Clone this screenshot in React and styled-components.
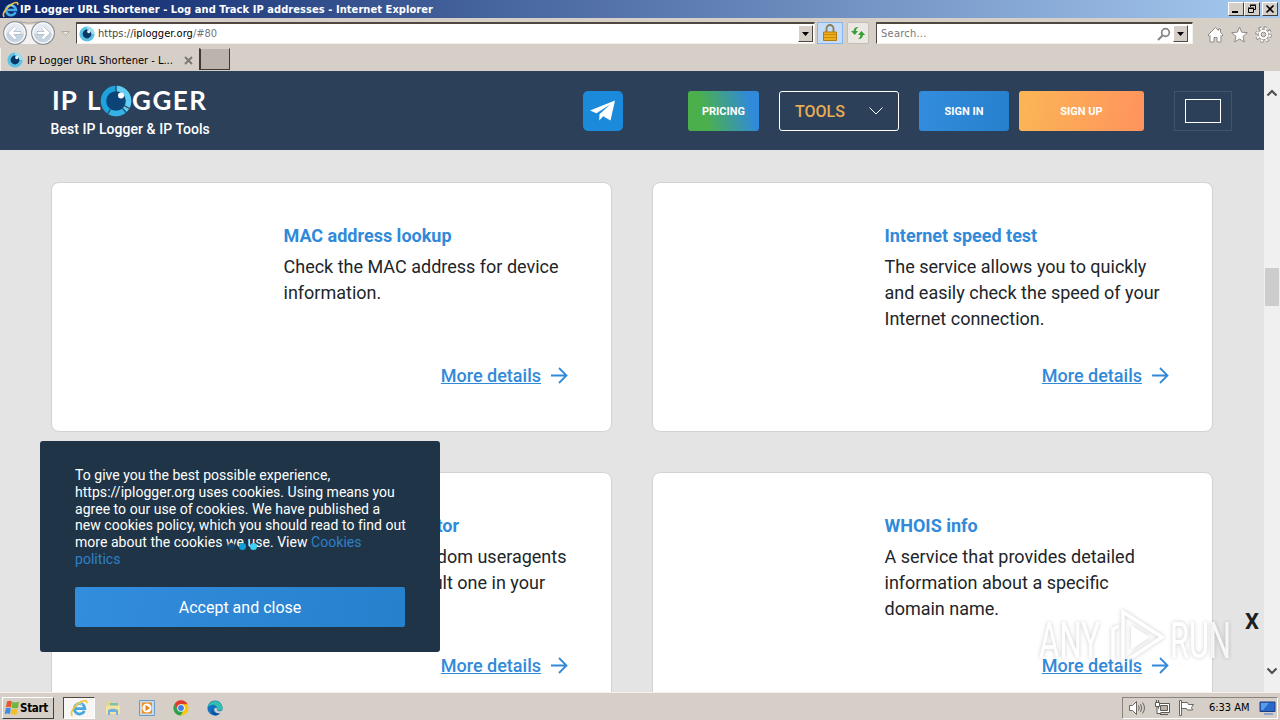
import styled, { createGlobalStyle } from 'styled-components';

const GlobalStyle = createGlobalStyle`
  * {
    box-sizing: border-box;
  }
  body {
    margin: 0;
    overflow: hidden;
    font-family: Roboto, sans-serif;
  }
`;

// Whole desktop
const Desktop = styled.div`
  position: relative;
  display: flex;
  flex-direction: column;
  width: 1280px;
  height: 720px;
  overflow: hidden;
  background: #d6cfc7;
`;

// System font used by the window chrome
const UiText = styled.span`
  font-family: 'DejaVu Sans Condensed', 'DejaVu Sans', sans-serif;
  font-stretch: condensed;
  font-size: ${(props) => props.$size || 11}px;
  font-weight: ${(props) => (props.$bold ? 700 : 400)};
  letter-spacing: ${(props) => props.$spacing || 0}px;
  color: ${(props) => props.$color || '#000'};
  white-space: nowrap;
`;

// Title bar
const TitleBar = styled.div`
  display: flex;
  align-items: center;
  gap: 1px;
  flex: none;
  height: 18px;
  padding: 0 2px;
  background: linear-gradient(90deg, #0a246a, #a6caf0);
`;

const WindowButtons = styled.div`
  display: flex;
  margin-left: auto;
`;

const WindowButton = styled.div`
  display: flex;
  width: 16px;
  height: 14px;
  margin-left: ${(props) => props.$gap || 0}px;
  background: #d6cfc7;
  border: 1px solid;
  border-color: #fff #404040 #404040 #fff;
`;

// Address bar row
const Toolbar = styled.div`
  display: flex;
  align-items: center;
  flex: none;
  height: 30px;
  padding: 0 8px 0 3px;
`;

const Field = styled.div`
  display: flex;
  align-items: center;
  gap: ${(props) => props.$inner || 3}px;
  width: ${(props) => props.$width}px;
  height: 22px;
  margin-left: ${(props) => props.$gap}px;
  padding: 0 1px 0 ${(props) => props.$left || 2}px;
  background: #fff;
  border: 1px solid #f4f1ec;
  border-top: 2px solid #504840;
  border-left: 1px solid #504840;
`;

const DropButton = styled.div`
  display: flex;
  align-items: center;
  justify-content: center;
  width: 15px;
  height: 17px;
  margin-right: ${(props) => props.$right || 0}px;
  background: #d6cfc7;
  border: 1px solid;
  border-color: #fff #504840 #504840 #fff;
`;

const Spacer = styled.div`
  flex: 1;
`;

const ToolButton = styled.div`
  display: flex;
  align-items: center;
  justify-content: center;
  width: ${(props) => props.$width}px;
  height: 22px;
  margin-left: ${(props) => props.$gap}px;
  background: ${(props) => (props.$active ? '#c4dcf8' : '#ebe8e3')};
  border: 1px solid ${(props) => (props.$active ? '#86b4ee' : '#c4beb6')};
  border-radius: ${(props) => (props.$active ? 0 : 2)}px;
`;

const ToolIcons = styled.div`
  display: flex;
  align-items: center;
  gap: 7px;
  margin-left: auto;
  padding-top: 3px;
`;

// Tabs row
const TabRow = styled.div`
  display: flex;
  flex: none;
  height: 23px;
`;

const Tab = styled.div`
  display: flex;
  align-items: center;
  width: 199px;
  padding: 1px 6px 0 6px;
  gap: 4px;
  border-left: 1px solid #f4f1ec;
`;

const NewTab = styled.div`
  width: 31px;
  height: 22px;
  background: #bcb4ac;
  border: 1px solid #403830;
  border-width: 1px 1px 1px 2px;
  border-top-color: #d6cfc7;
`;

// Page and its scrollbar
const Browser = styled.div`
  display: flex;
  flex: none;
  height: 621px;
`;

const Page = styled.div`
  width: 1264px;
  height: 621px;
  overflow: hidden;
  background: #e4e4e4;
`;

const ScrollBar = styled.div`
  display: flex;
  flex-direction: column;
  align-items: center;
  justify-content: space-between;
  width: 16px;
  padding: 18px 0 17px;
  background: #f0f0f0;
`;

const ScrollThumb = styled.div`
  width: 14px;
  height: 38px;
  margin: 171px 0 auto;
  background: #cdcdcd;
`;

// Site header
const Header = styled.header`
  display: flex;
  align-items: flex-start;
  height: 79px;
  padding: 20px 32px 0 51px;
  background: #2c4059;
`;

const Brand = styled.div`
  width: 532px;
  margin-top: -6px;
`;

const Wordmark = styled.div`
  display: flex;
  align-items: center;
  height: 31px;
  padding-left: 1px;
`;

const WordmarkText = styled.span`
  width: ${(props) => props.$width}px;
  font-family: Lato, sans-serif;
  font-size: 26px;
  font-weight: 700;
  line-height: 31px;
  letter-spacing: ${(props) => props.$spacing || 0}px;
  color: #fff;
  white-space: nowrap;
`;

const Tagline = styled.div`
  margin: 5px 0 0 -0.5px;
  font-size: 14px;
  font-weight: 500;
  line-height: 17px;
  letter-spacing: 0.05px;
  color: #fff;
`;

const Telegram = styled.div`
  display: flex;
  align-items: center;
  justify-content: center;
  width: 40px;
  height: 40px;
  margin-right: 65px;
  background: #1c8adb;
  border-radius: 5px;
`;

const HeaderButton = styled.div`
  display: flex;
  align-items: center;
  justify-content: center;
  width: ${(props) => props.$width}px;
  height: 40px;
  margin-right: ${(props) => props.$gap}px;
  background: ${(props) => props.$fill};
  border-radius: 3px;
  font-size: 11px;
  font-weight: 700;
  color: #fff;
`;

const ToolsSelect = styled.div`
  display: flex;
  align-items: center;
  justify-content: space-between;
  width: 120px;
  height: 40px;
  margin-right: 20px;
  padding: 0 15px 0 15px;
  border: 1px solid #fff;
  border-radius: 3px;
  font-size: 16px;
  font-weight: 500;
  color: #e8ac55;
`;

const Language = styled.div`
  display: flex;
  align-items: center;
  justify-content: center;
  width: 58px;
  height: 40px;
  border: 1px solid #40546d;
`;

const Flag = styled.div`
  width: 36px;
  height: 24px;
  border: 1px solid #fff;
`;

// Service cards
const CardGrid = styled.main`
  display: grid;
  grid-template-columns: 561px 561px;
  grid-auto-rows: 250px;
  gap: 40px;
  padding: 32px 51px 0;
`;

const Card = styled.article`
  display: flex;
  flex-direction: column;
  padding: 40px 43px 42px 231.5px;
  background: #fff;
  border: 1px solid #d2d2d2;
  border-radius: 8px;
`;

const CardTitle = styled.h3`
  margin: 0 0 5px;
  font-size: 18px;
  font-weight: 700;
  line-height: 26px;
  color: #318ad9;
`;

const CardText = styled.p`
  margin: 0;
  font-size: 18px;
  line-height: 26px;
  color: #212529;
  white-space: pre;
`;

const MoreLink = styled.a`
  display: flex;
  align-items: center;
  justify-content: flex-end;
  gap: 9px;
  margin-top: auto;
  font-size: 18px;
  font-weight: 500;
  line-height: 26px;
  color: #318ad9;

  span {
    text-decoration: underline;
  }
`;

// Cookie notice lies over the cards
const CookieNotice = styled.aside`
  position: absolute;
  left: 40px;
  top: 441px;
  width: 400px;
  height: 211px;
  padding: 26px 35px 0;
  background: #1f3547;
  border-radius: 3px;
  font-size: 14px;
  line-height: 16.8px;
  color: #fff;
`;

const CookieText = styled.p`
  height: 101px;
  margin: 0 0 19px;
  letter-spacing: 0.035px;
  white-space: pre;
`;

const CookieLink = styled.a`
  color: #2f80c8;
`;

const AcceptButton = styled.div`
  height: 40px;
  padding-top: 1px;
  background: linear-gradient(100deg, #338ddd, #2780cc);
  border-radius: 2px;
  font-size: 16px;
  line-height: 40px;
  text-align: center;
`;

const Loader = styled.div`
  position: absolute;
  left: 228px;
  top: 543px;
  display: flex;
  gap: 4px;
`;

const Dot = styled.i`
  width: 7px;
  height: 7px;
  border-radius: 50%;
  background: ${(props) => props.$color};
`;

const CloseMark = styled.div`
  position: absolute;
  left: 1245px;
  top: 609px;
  font-size: 22px;
  font-weight: 700;
  line-height: 26px;
  color: #1d1f22;
`;

const Watermark = styled.svg`
  position: absolute;
  left: 1034px;
  top: 604px;
  overflow: visible;
  filter: drop-shadow(0 0 2px rgba(0, 0, 0, 0.28));
  opacity: 0.72;
`;

// Taskbar
const TaskBar = styled.footer`
  display: flex;
  align-items: center;
  flex: none;
  height: 28px;
  padding: 2px 2px 0;
  background: #d6cfc7;
  border-top: 1px solid #f4f1ec;
`;

const StartButton = styled.div`
  display: flex;
  align-items: center;
  width: 52px;
  height: 22px;
  padding-left: 1px;
  border: 1px solid;
  border-color: #fff #404040 #404040 #fff;
`;

const TaskItem = styled.div`
  display: flex;
  align-items: center;
  justify-content: center;
  width: ${(props) => (props.$active ? 32 : 34)}px;
  height: 22px;
  margin: 0 ${(props) => (props.$active ? '1px 0 9px' : 0)};
  background: ${(props) => (props.$active ? '#f8f6f4' : 'none')};
  border: ${(props) => (props.$active ? '1px solid' : '0')};
  border-color: #504840 #fff #fff #504840;
`;

const Tray = styled.div`
  display: flex;
  align-items: center;
  width: 156px;
  height: 22px;
  margin-left: auto;
  padding-left: 6px;
  border: 1px solid;
  border-color: #8c847c #fff #fff #8c847c;
`;

const TrayIcons = styled.div`
  display: flex;
  gap: 8px;
  width: 80px;
`;

const IeIcon = ({ size }) => (
  <svg width={size} height={size} viewBox="0 0 16 16" fill="none">
    <path d="M12.8 10.6A4.700 4.700 0 1 1 13.200 8.500H4.500" stroke="#45a9e6" strokeWidth="2.500" />
    <path d="M5.200 5.200A4 4 0 0 1 11 5.400" stroke="#a5e4fa" strokeWidth="1" />
    <path d="M2.200 14.800C-.5 13.400 3 7 8 3.600 12 .8 15.700.4 14.700 3.800" stroke="#f3c53c" strokeWidth="1.500" />
  </svg>
);

const Eye = () => (
  <svg width="16" height="16" viewBox="0 0 16 16">
    <circle cx="8" cy="8" r="7.600" fill="#5cc2e4" />
    <path d="M8 .4a7.600 7.600 0 0 1 7.600 7.600L8 8z" fill="#a0def0" />
    <circle cx="8" cy="8" r="4.400" fill="#0b3768" />
    <circle cx="9.800" cy="5.500" r="1.700" fill="#d8f2fa" />
  </svg>
);

const NavButtons = () => (
  <svg width="68" height="28" viewBox="0 0 68 28" fill="none">
    <path d="M12 3.500Q26 8 40 3.500V25H12Z" fill="#f4f2f0" />
    <path d="M16 2.800Q26 5.500 36 2.800" stroke="#aca6a0" />
    {[12, 40].map((x) => (
      <g key={x}>
        <circle cx={x} cy="14" r="11.300" fill="#e6ebf1" stroke="#8f9296" strokeWidth="1.300" />
        <path d={`M${x - 9} 14.500a9 9 0 0 0 18 0z`} fill="#c6d3e1" />
        <circle cx={x} cy="14" r="10" stroke="#f7f9fb" strokeWidth="1.200" />
      </g>
    ))}
    <path d="M12.500 8.500 7 14l5.500 5.500M7.500 14H18" stroke="#a3afbc" strokeWidth="3.800" />
    <path d="M12.500 8.500 7 14l5.500 5.500M7.500 14H17.600" stroke="#fff" strokeWidth="2.600" />
    <path d="M39.500 8.500 45 14l-5.500 5.500M44.500 14H34" stroke="#a3afbc" strokeWidth="3.800" />
    <path d="M39.500 8.500 45 14l-5.500 5.500M44.500 14H34.400" stroke="#fff" strokeWidth="2.600" />
    <path d="M58.500 12.500h8l-4 4z" fill="#e8e4df" stroke="#b4aca4" />
  </svg>
);

const Triangle = () => (
  <svg width="7" height="4" viewBox="0 0 7 4">
    <path d="M0 0h7L3.500 4z" fill="#000" />
  </svg>
);

const LogoEye = () => (
  <svg width="32" height="32" viewBox="0 0 32 32" fill="none">
    <circle cx="16" cy="16" r="12" stroke="#1fa3dc" strokeWidth="6.500" />
    <path d="M16.500 4A12 12 0 0 1 28 15" stroke="#62cdf3" strokeWidth="6.500" />
    <path d="M28 15A12 12 0 0 1 24.500 24.500" stroke="#62cdf3" strokeWidth="6.500" />
    <path d="M23.500 25.500A12 12 0 0 1 10 26.500" stroke="#33b3e6" strokeWidth="6.500" />
    <circle cx="16" cy="16" r="9.800" fill="#0c4478" />
    <path d="M16 .5V7M24 20.500l5.500 3M22 22.500l4 5M10.500 24.500 7.500 29" stroke="#2c4059" strokeWidth="1.200" />
    <circle cx="21" cy="10.500" r="3" fill="#fff" />
  </svg>
);

const Arrow = () => (
  <svg width="18" height="18" viewBox="0 0 18 18" fill="none" stroke="#318ad9" strokeWidth="1.800">
    <path d="M1 8.500h15M9 1l7.500 7.500L9 16" />
  </svg>
);

const ScrollArrow = ({ down }) => (
  <svg width="12" height="8" viewBox="0 0 12 8" fill="none" stroke="#505050" strokeWidth="2.200">
    <path d={down ? 'M1.500 1.500 6 6l4.500-4.500' : 'M1.500 6.500 6 2l4.500 4.500'} />
  </svg>
);

const cards = [
  { title: 'MAC address lookup', text: 'Check the MAC address for device\ninformation.' },
  {
    title: 'Internet speed test',
    text: 'The service allows you to quickly\nand easily check the speed of your\nInternet connection.',
  },
  {
    title: 'User-Agent generator',
    text: 'Generates valid random useragents\nto replace the default one in your\nbrowser.',
  },
  {
    title: 'WHOIS info',
    text: 'A service that provides detailed\ninformation about a specific\ndomain name.',
  },
];

const App = () => (
  <Desktop>
    <GlobalStyle />
    <TitleBar>
      <IeIcon size={17} />
      <UiText $bold $color="#fff" $spacing={0.07}>
        IP Logger URL Shortener - Log and Track IP addresses - Internet Explorer
      </UiText>
      <WindowButtons>
        <WindowButton>
          <svg width="14" height="12"><path d="M3 8h6v2H3z" /></svg>
        </WindowButton>
        <WindowButton>
          <svg width="14" height="12" fill="none" stroke="#000">
            <path d="M5.500 4V2.500h5v4H9M5 2h6M3.500 5.500h5v4h-5zM3 5h6" />
          </svg>
        </WindowButton>
        <WindowButton $gap={2}>
          <svg width="14" height="12"><path d="M3.500 2.500l7 7M10.500 2.500l-7 7" stroke="#000" strokeWidth="1.600" /></svg>
        </WindowButton>
      </WindowButtons>
    </TitleBar>

    <Toolbar>
      <NavButtons />
      <Field $width={739} $gap={5}>
        <Eye />
        <UiText $spacing={0.04}>
          <UiText $color="#444">https://</UiText>iplogger.org<UiText $color="#777">/#80</UiText>
        </UiText>
        <Spacer />
        <DropButton><Triangle /></DropButton>
      </Field>
      <ToolButton $width={26} $gap={2} $active>
        <svg width="14" height="18" viewBox="0 0 14 18" fill="none">
          <path d="M3.500 9V4.500a3.500 3.500 0 0 1 7 0V9" stroke="#8c7a50" strokeWidth="1.800" />
          <path d="M.5 8h13v8.500H.5z" fill="#eeae1c" stroke="#b07c10" />
          <path d="M1 10.500h12M1 13.500h12" stroke="#c8890f" />
        </svg>
      </ToolButton>
      <ToolButton $width={22} $gap={4}>
        <svg width="16" height="16" viewBox="0 0 16 16" fill="#36a136">
          <path d="M8.500 2C6 1.500 3.800 3 3.500 6H1l3.800 4L8 6H5.800C6 4.200 7 3 8.500 2z" />
          <path d="M8 14c2.500.5 4.700-1 5-4h2.200L11.400 6 8 10h2.500C10.300 11.800 9.500 13 8 14z" />
        </svg>
      </ToolButton>
      <Field $width={317} $gap={7} $left={4} $inner={2}>
        <UiText $color="#777" $spacing={0.25}>Search...</UiText>
        <Spacer />
        <svg width="14" height="14" viewBox="0 0 14 14" fill="none" stroke="#858585">
          <circle cx="8.500" cy="5.500" r="3.800" strokeWidth="1.700" />
          <path d="M5.500 8.500 1 13" strokeWidth="2" />
        </svg>
        <DropButton $right={3}><Triangle /></DropButton>
      </Field>
      <ToolIcons>
        <svg width="17" height="17" viewBox="0 0 17 17" fill="#fff" stroke="#8e8a86">
          <path d="M8.500 1.500 1 9l1.300 1.300L3 9.600v6.400h4v-4.500h3V16h4V9.600l.7.7L16 9l-2.500-2.500V3h-2v1.500z" />
        </svg>
        <svg width="17" height="17" viewBox="0 0 17 17" fill="#fff" stroke="#8e8a86">
          <path d="m8.500 1 2.200 5.200 5.600.5-4.300 3.700 1.300 5.500-4.800-2.900-4.800 2.900L5 10.400.7 6.700l5.600-.5z" />
        </svg>
        <svg width="17" height="17" viewBox="0 0 17 17" fill="none">
          <circle cx="8.500" cy="8.500" r="6.600" stroke="#8e8a86" strokeWidth="3.400" strokeDasharray="2.900 2.280" />
          <circle cx="8.500" cy="8.500" r="5.300" fill="#fff" stroke="#8e8a86" />
          <circle cx="8.500" cy="8.500" r="6.300" stroke="#fff" strokeWidth="2.200" strokeDasharray="2 2.950" strokeDashoffset="-.4" />
          <circle cx="8.500" cy="8.500" r="2.300" fill="#d6cfc7" stroke="#8e8a86" />
        </svg>
      </ToolIcons>
    </Toolbar>

    <TabRow>
      <Tab>
        <Eye />
        <UiText>IP Logger URL Shortener - L...</UiText>
        <Spacer />
        <svg width="9" height="9" viewBox="0 0 9 9">
          <path d="m1 1 7 7M8 1 1 8" stroke="#7c7670" strokeWidth="1.800" />
        </svg>
      </Tab>
      <NewTab />
    </TabRow>

    <Browser>
      <Page>
        <Header>
          <Brand>
            <Wordmark>
              <WordmarkText $width={35} $spacing={1}>IP</WordmarkText>
              <WordmarkText $width={13}>L</WordmarkText>
              <LogoEye />
              <WordmarkText $width={80} $spacing={1.5}>GGER</WordmarkText>
            </Wordmark>
            <Tagline>Best IP Logger &amp; IP Tools</Tagline>
          </Brand>
          <Telegram>
            <svg width="26" height="22" viewBox="0 0 26 22" fill="#fff">
              <path d="M25 .5 0 10.500l6.500 2.700L20 4.500 9.500 14.300l-.3 6.200 4-4.300 7.300 4.300z" />
            </svg>
          </Telegram>
          <HeaderButton $width={71} $gap={20} $fill="linear-gradient(75deg, #4bb04c 25%, #318ad9 85%)">
            PRICING
          </HeaderButton>
          <ToolsSelect>
            TOOLS
            <svg width="14" height="8" viewBox="0 0 14 8" fill="none" stroke="#fff">
              <path d="m.5.5 6.500 6.500L13.500.5" />
            </svg>
          </ToolsSelect>
          <HeaderButton $width={90} $gap={10} $fill="linear-gradient(100deg, #338ddd, #2780cc)">
            SIGN IN
          </HeaderButton>
          <HeaderButton $width={125} $gap={30} $fill="linear-gradient(100deg, #fbb655, #ff935d)">
            SIGN UP
          </HeaderButton>
          <Language>
            <Flag />
          </Language>
        </Header>
        <CardGrid>
          {cards.map((card) => (
            <Card key={card.title}>
              <CardTitle>{card.title}</CardTitle>
              <CardText>{card.text}</CardText>
              <MoreLink>
                <span>More details</span>
                <Arrow />
              </MoreLink>
            </Card>
          ))}
        </CardGrid>
      </Page>
      <ScrollBar>
        <ScrollArrow />
        <ScrollThumb />
        <ScrollArrow down />
      </ScrollBar>
    </Browser>

    <CookieNotice>
      <CookieText>
        {'To give you the best possible experience,\nhttps://iplogger.org uses cookies. Using means you\nagree to our use of cookies. We have published a\nnew cookies policy, which you should read to find out\nmore about the cookies we use. View '}
        <CookieLink>{'Cookies\npolitics'}</CookieLink>
      </CookieText>
      <AcceptButton>Accept and close</AcceptButton>
    </CookieNotice>
    <Loader>
      <Dot $color="#17436a" />
      <Dot $color="#0fa0d8" />
      <Dot $color="#3fd0f5" />
    </Loader>
    <CloseMark>X</CloseMark>

    <Watermark width="204" height="66" viewBox="0 0 204 66">
      <g fill="#fff" fontFamily="Roboto" fontSize="50">
        <text x="5" y="54" textLength="61" lengthAdjust="spacingAndGlyphs">ANY</text>
        <text x="136" y="54" textLength="61" lengthAdjust="spacingAndGlyphs">RUN</text>
      </g>
      <path d="M79 56V25l6-3M89 62V8l39 25-33 22" fill="none" stroke="#fff" strokeWidth="3.500" />
      <path d="M97 21v25l19-13z" fill="#fff" />
    </Watermark>

    <TaskBar>
      <StartButton>
        <svg width="16" height="16" viewBox="0 0 16 16">
          <path d="M3 1.500q2.500-1.500 5 0L7 7.500q-2.500-1.300-5 0z" fill="#e8582a" />
          <path d="M8.700 1.800q3 1.500 6.300-.3L14 7.700q-3 1.300-6.300 0z" fill="#6fb63c" />
          <path d="M1.800 8.300q2.500-1.200 5 0l-1 5.700q-2.500-1.200-5 0z" fill="#3d8ee0" />
          <path d="M7.500 8.700q3 1.300 6.300 0l-1.200 5.500q-3 1.300-6-.2z" fill="#f2c02c" />
        </svg>
        <UiText $bold $size={11.5} $spacing={-0.3}>Start</UiText>
      </StartButton>
      <TaskItem $active>
        <IeIcon size={18} />
      </TaskItem>
      <TaskItem>
        <svg width="16" height="16" viewBox="0 0 16 16">
          <path d="M1.500 2h4l1 1h5l1 2H15v9H1.500z" fill="#ecd27c" />
          <path d="M5 3h8v3H5z" fill="#7cc4a4" />
          <path d="M1 5.500h14V14H1z" fill="#f4e3a0" />
          <path d="M3 10q5-2.500 10 0v5h-2v-3H5v3H3z" fill="#6db2dc" />
        </svg>
      </TaskItem>
      <TaskItem>
        <svg width="16" height="16" viewBox="0 0 16 16">
          <path d="M.5.5h15v15H.5z" fill="#c3dcf2" stroke="#6b9cc8" />
          <path d="M3 2.500h10v11H3z" fill="#f58a1c" />
          <circle cx="8" cy="8" r="4.600" fill="#fff" />
          <path d="m6.500 5 4.500 3-4.500 3z" fill="#f07c10" />
        </svg>
      </TaskItem>
      <TaskItem>
        <svg width="16" height="16" viewBox="0 0 16 16">
          <circle cx="8" cy="8" r="7.600" fill="#f9c80e" />
          <path d="M1.400 4.200A7.600 7.600 0 0 1 14.600 4.200H8L4.700 10z" fill="#e03c2e" />
          <path d="M1.400 4.200A7.600 7.600 0 0 0 7.600 15.600L11 9.800 4.700 10z" fill="#2fa04e" />
          <circle cx="8" cy="8" r="3.800" fill="#fff" />
          <circle cx="8" cy="8" r="2.900" fill="#3d7ee8" />
        </svg>
      </TaskItem>
      <TaskItem>
        <svg width="16" height="16" viewBox="0 0 16 16">
          <circle cx="8" cy="8" r="7.600" fill="#1470c0" />
          <path d="M.6 7A7.600 7.600 0 0 1 15.600 8c0 3-5 3.500-6 1.500C11 7 8 4 4.500 5 2.500 5.500 1 6.500.6 7z" fill="#33bfae" />
          <path d="M6 8c-1.500 4 2 6.500 7 5.200A7.600 7.600 0 0 1 9 15.500C5 15 3.500 10.500 6 8z" fill="#0c4c98" />
          <path d="M9.500 8c1 1.500-.5 2.500 2 3.200 2 .3 3.500-.5 4-1.200V13l-3 .5C8 13 6 10 8 8z" fill="#d6cfc7" />
        </svg>
      </TaskItem>
      <Tray>
        <TrayIcons>
          <svg width="17" height="16" viewBox="0 0 17 16" fill="none" stroke="#6a6660">
            <path d="M.5 5.500h3l4-4v13l-4-4h-3z" fill="#fff" />
            <path d="M9.500 5.500q1.500 2.500 0 5M11.500 4q2.500 4 0 8M13.500 2.500q4 5.500 0 11" />
          </svg>
          <svg width="16" height="16" viewBox="0 0 16 16" fill="#fff" stroke="#5c5852">
            <path d="M4.500 3.500h11v9h-11z" />
            <path d="M6.500 5.500h7v5h-7z" fill="#b8b2aa" />
            <path d="M6 14.500h8M3 6v7.500h4M1.500 2.500h4v4h-4zM2.500 0v2.500M4.500 0v2.500" />
          </svg>
          <svg width="16" height="16" viewBox="0 0 16 16" fill="#fff" stroke="#6a6660">
            <path d="M1.500.5h2v15h-2zM3.500 2.500h6l1 2h5l-2 3 1 2.500h-5l-1-1.500h-5z" />
          </svg>
        </TrayIcons>
        <UiText $spacing={-0.02}>6:33 AM</UiText>
        <Spacer />
        <svg width="18" height="16" viewBox="0 0 18 16">
          <path d="M1 2h15v9.500H1z" fill="#2868c8" stroke="#1c3f80" />
          <path d="M2 3h8L4 10H2z" fill="#5a9cec" />
          <path d="M5 14h9" stroke="#8ca4c8" strokeWidth="2" />
        </svg>
      </Tray>
    </TaskBar>
  </Desktop>
);

export default App;
